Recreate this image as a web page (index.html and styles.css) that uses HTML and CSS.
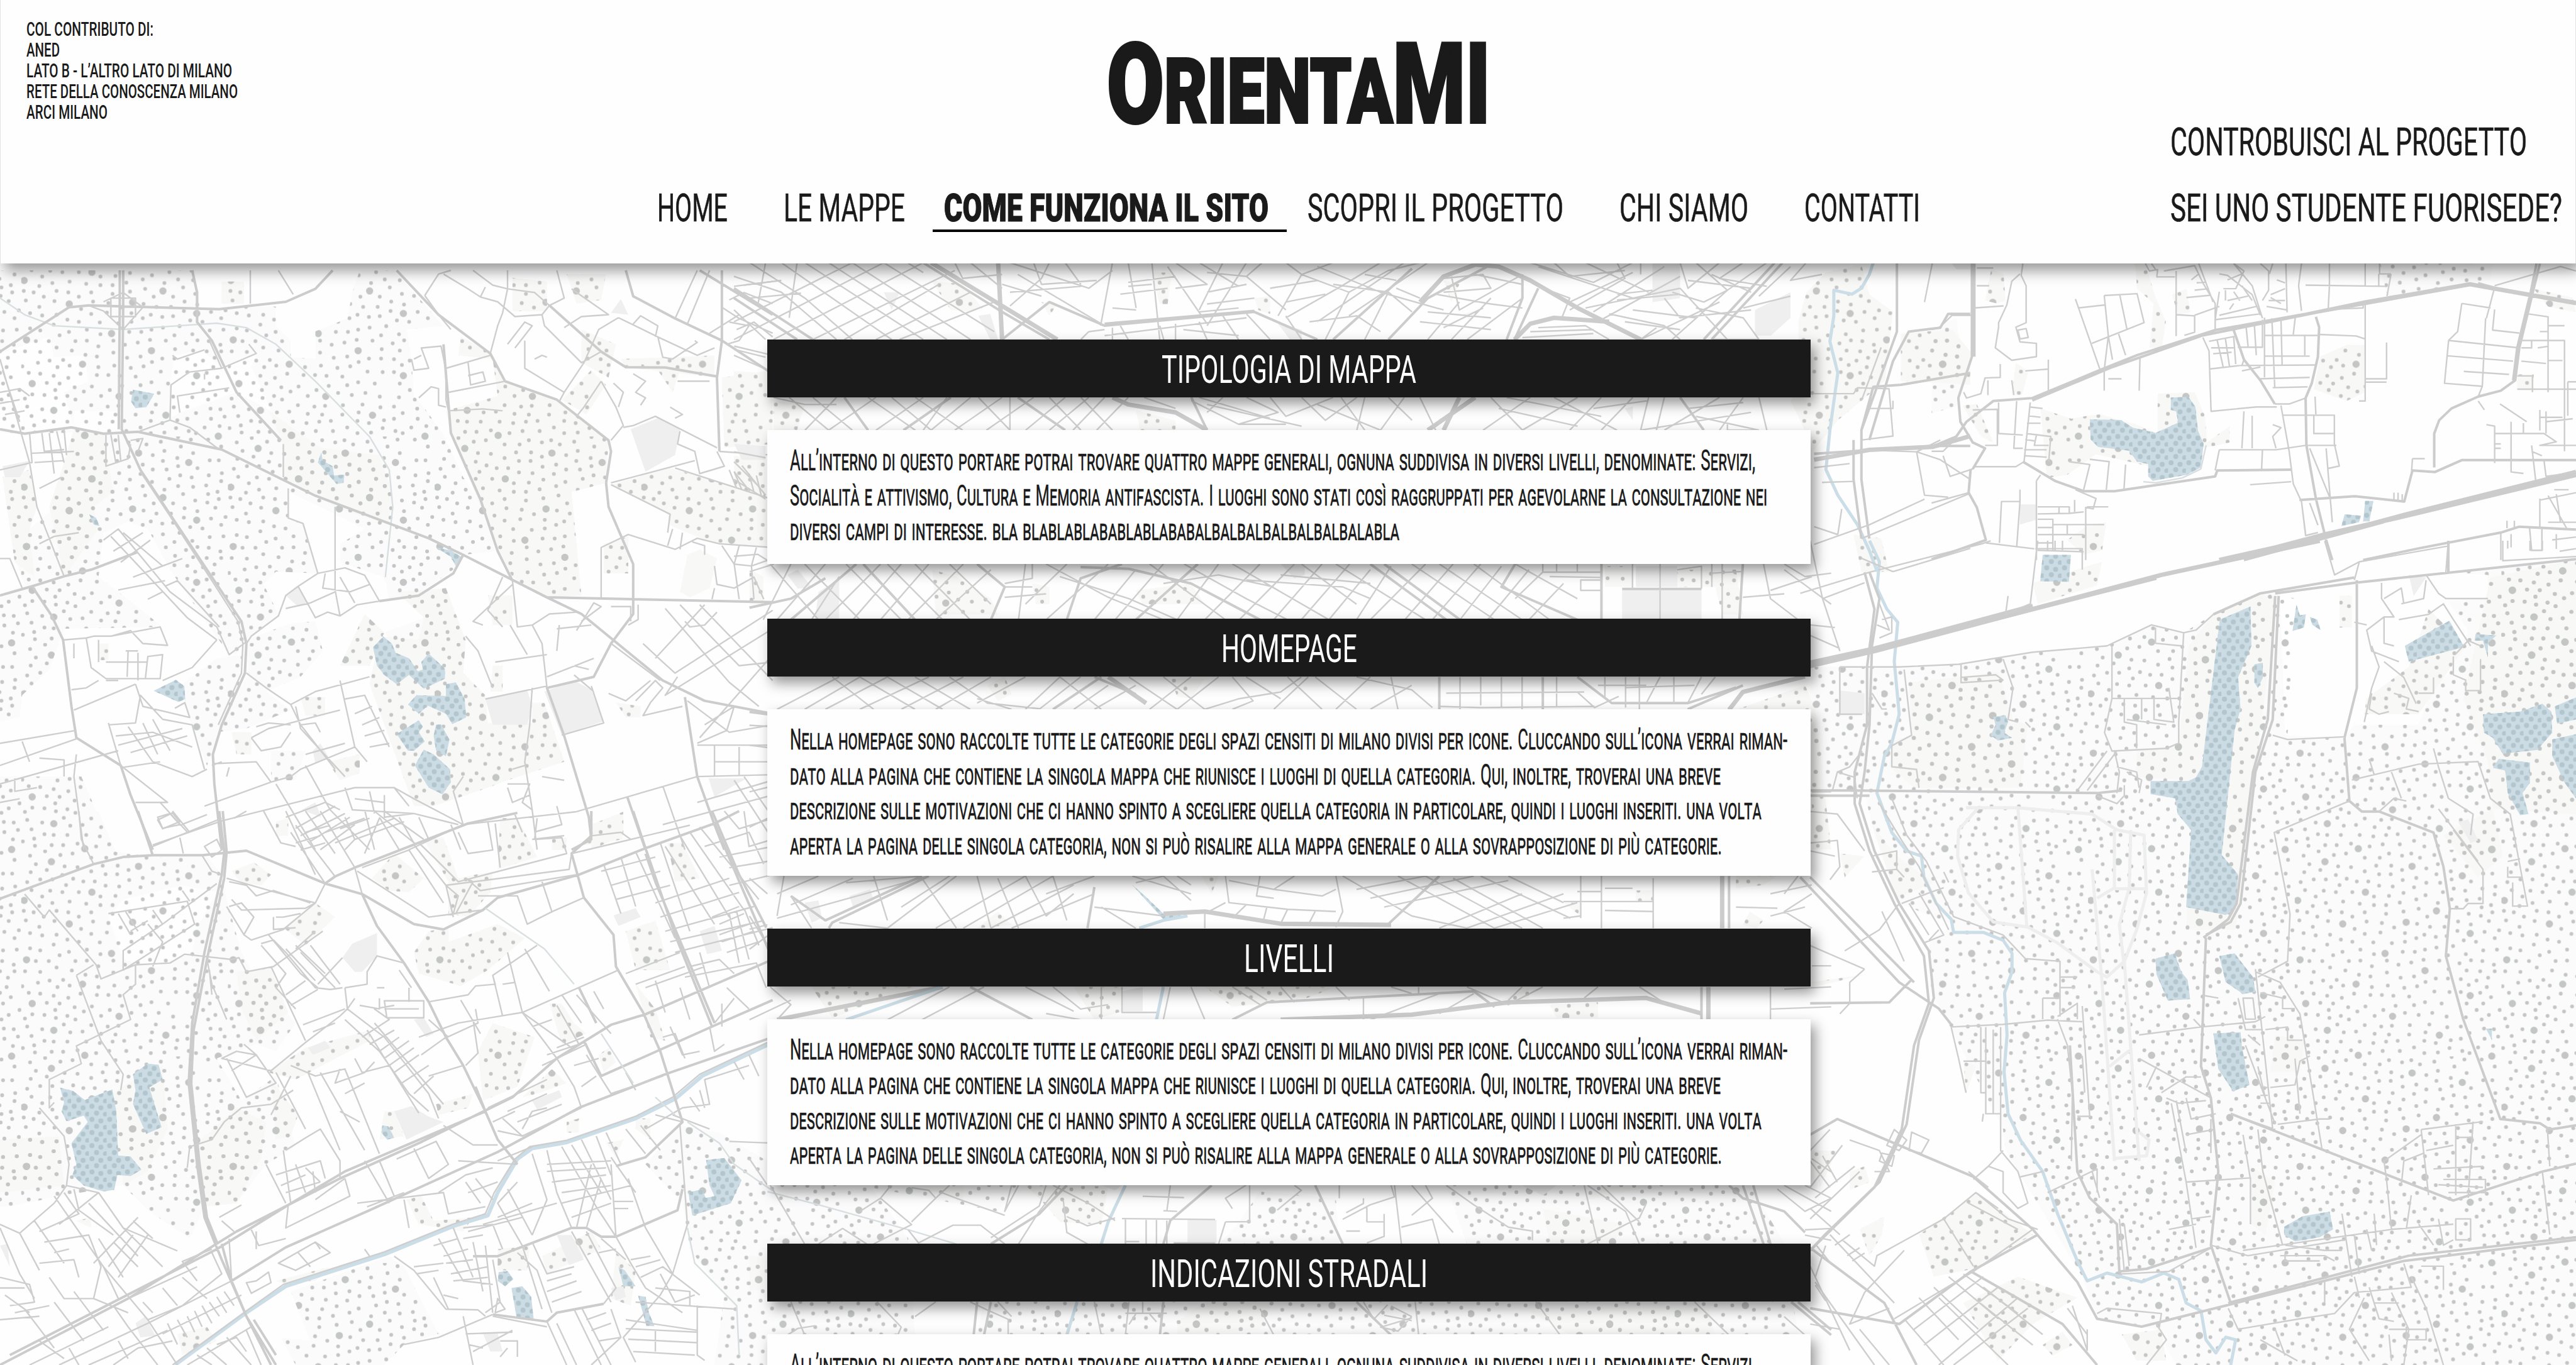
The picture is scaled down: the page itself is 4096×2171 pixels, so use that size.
FILE: index.html
```html
<!DOCTYPE html>
<html lang="it">
<head>
<meta charset="utf-8">
<title>OrientaMI</title>
<link rel="stylesheet" href="styles.css">
</head>
<body>
<svg class="map" viewBox="0 0 6668 3534" preserveAspectRatio="none" aria-hidden="true">
  <defs>
    <pattern id="dots" width="1568" height="1568" patternUnits="userSpaceOnUse" patternTransform="translate(5940 2200) scale(.3412)">
      <path class="dot-s" d="M181 12h0M67 45h0M111 110h0M72 170h0M45 246h0M144 225h0M194 154h0M297 40h0M389 29h0M329 126h0M427 132h0M312 192h0M236 225h0M394 220h0M471 241h0M558 241h0M531 61h0M531 164h0M645 61h0M618 121h0M715 29h0M732 121h0M640 186h0M728 186h0M814 45h0M884 29h0M950 61h0M814 154h0M819 230h0M922 214h0M998 142h0M998 251h0M1059 40h0M1086 110h0M1075 186h0M1103 251h0M640 273h0M743 279h0M905 285h0M825 328h0M992 345h0M1124 322h0M922 377h0M1086 404h0M78 306h0M159 355h0M220 311h0M312 322h0M340 268h0M437 322h0M367 393h0M236 404h0M137 427h0M493 410h0M601 355h0M601 420h0M715 350h0M693 420h0M797 401h0M940 448h0M825 469h0M693 486h0M19 464h0M94 475h0M171 508h0M268 464h0M357 475h0M437 508h0M531 475h0M545 545h0M252 541h0M35 536h0M137 585h0M454 601h0M661 556h0M754 590h0M928 562h0M1005 508h0M1026 585h0M1152 508h0M1136 585h0M67 633h0M159 650h0M268 645h0M350 682h0M437 698h0M531 639h0M650 628h0M836 633h0M836 698h0M922 671h0M983 645h0M1070 661h0M1152 655h0M1075 742h0M988 758h0M911 775h0M819 775h0M737 709h0M596 703h0M498 758h0M362 775h0M246 720h0M144 764h0M67 748h0M291 801h0M111 845h0M209 845h0M411 845h0M498 841h0M601 792h0M699 841h0M787 872h0M884 856h0M977 835h0M1097 841h0M1162 801h0M585 884h0M268 894h0M144 927h0M29 922h0M384 916h0M487 949h0M574 962h0M699 932h0M803 971h0M905 962h0M1167 906h0M1070 977h0M1162 977h0M992 1003h0M928 1036h0M831 1048h0M706 1031h0M585 1042h0M367 1031h0M318 988h0M215 993h0M127 1009h0M275 1042h0M8 1036h0M57 1086h0M144 1092h0M246 1108h0M357 1124h0M450 1092h0M574 1102h0M661 1102h0M748 1108h0M868 1114h0M1059 1076h0M1174 1080h0M988 1157h0M1114 1167h0M905 1179h0M765 1184h0M536 1189h0M405 1195h0M291 1167h0M194 1162h0M258 1216h0M475 1227h0M672 1216h0M836 1238h0M940 1254h0M1043 1238h0M1152 1266h0M84 1249h0M176 1254h0M263 1276h0M350 1261h0M411 1288h0M606 1261h0M323 1326h0M531 1331h0M656 1342h0M737 1336h0M873 1331h0M1021 1326h0M1157 1347h0M159 1362h0M372 1386h0M465 1380h0M606 1397h0M715 1402h0M868 1402h0M992 1386h0M983 1450h0M1070 1467h0M176 1450h0M246 1456h0M350 1456h0M493 1456h0M596 1467h0M693 1456h0M781 1450h0M905 1500h0M231 1533h0M318 1533h0M427 1522h0M568 1543h0M667 1527h0M797 1527h0M983 1543h0M1086 1538h0M1174 1505h0M1184 1445h0M1260 1434h0M1326 1391h0M1260 1342h0M1190 5h0M1287 24h0M1418 24h0M1211 77h0M1304 126h0M1184 164h0M1190 225h0M1337 241h0M1517 77h0M1430 181h0M1499 181h0M1206 295h0M1293 311h0M1423 295h0M1522 279h0M1517 339h0M1190 377h0M1304 383h0M1403 372h0M1228 437h0M1489 420h0M1418 437h0M1320 486h0M1412 502h0M1499 475h0M1473 541h0M1239 545h0M1336 567h0M1234 616h0M1440 623h0M1550 611h0M1282 688h0M1375 698h0M1517 671h0M1201 731h0M1430 764h0M1534 758h0M1298 792h0M1337 839h0M1423 845h0M1250 862h0M1511 872h0M1304 916h0M1407 922h0M1517 922h0M1467 971h0M1379 993h0M1260 982h0M1320 1026h0M1457 1042h0M1260 1080h0M1407 1086h0M1489 1119h0M1304 1167h0M1430 1167h0M1380 1216h0M1555 1216h0M1473 1254h0M1298 1271h0M1418 1288h0M1436 1357h0M1511 1362h0M1543 1418h0M1440 1434h0M1391 1500h0M1505 1489h0M1271 1527h0M1326 1543h0M28 1281h0M45 1342h0M78 1413h0M98 1484h0M12 1505h0M104 1538h0"/>
      <path class="dot-l" d="M229 91h0M890 126h0M1271 198h0M536 322h0M22 385h0M1075 464h0M845 550h0M364 563h0M1331 635h0M685 787h0M40 835h0M988 917h0M465 1020h0M1331 1107h0M83 1167h0M742 1264h0M247 1370h0M1097 1407h0M482 -8h0M482 1560h0M1495 -2h0M1495 1566h0"/>
    </pattern>
    <pattern id="ripples" width="46" height="34" patternUnits="userSpaceOnUse">
      <path class="ripple" d="M8 8h0M31 12h0M20 26h0M43 29h0"/>
    </pattern>
    <clipPath id="fields">
      <path transform="translate(0 700) scale(1.2755 .9566)" d="M0 0H395L405 100L560 98L560 150L590 190V235L640 240V165L705 130L715 60L730 0H800L900 150L825 160L835 240L840 340L860 370L900 445L940 560L980 640L1005 760L940 770L930 800L840 885L790 890L780 830L690 790V740L740 700L650 640L585 600V670L615 685L645 820L560 815L535 850L565 930L500 1000L480 1040L460 1030L350 820L300 700L260 680L210 710L200 830L240 870L330 965L130 970L100 1080L45 1150L40 1210L0 1220V880L50 850L30 780L60 700L150 600V440L0 440V0Z"/>
      <path transform="translate(0 700) scale(1.2755 .9566)" d="M440 1050L490 1040V1100L430 1310L420 1340L380 1200L370 1120ZM505 1090L500 1000L590 955L640 950L655 1030L610 1100L540 1140L590 1190L500 1240L440 1250ZM780 980L860 940L890 1050L860 1080L800 1010ZM550 1300H620L600 1380H550ZM0 1370H165L230 1568H0Z"/>
      <path transform="translate(0 2100) scale(1.2755 .9145)" d="M0 0H200L235 115L310 130L420 130L450 180L460 250L490 400L510 450L600 600L560 680L520 660L440 700L490 820L560 750L600 950L540 1000L480 1110L415 1120L385 1210L300 1130L250 1060L120 1090L20 1120L0 1120ZM590 1360L790 1260L820 1290L860 1400L890 1480L820 1510L780 1568H600L570 1490L630 1500ZM1380 890L1460 910L1568 1000V1568H1450L1470 1370L1400 1240L1385 1110L1310 1000Z"/>
      <path transform="translate(4660 1400) scale(1.2806 1.361)" d="M20 240L200 240L320 235L470 212L620 200L710 160L775 175L835 140L930 100L960 100L1000 110L985 370L1100 375L1120 350L1250 350L1270 300L1320 240L1350 170L1310 115L1390 110V65L1310 60L1568 35V1568H760L720 1500L600 1480L570 1400L415 1160L410 1120L300 920L265 860L260 760L310 730L200 690L150 560L130 480L20 470Z"/>
      <path transform="translate(5000 250) scale(1.0638 .7653)" d="M1090 565H1365L1360 620L1110 680ZM0 790L60 750L70 850L90 900L60 1050L0 1070Z"/>
      <path transform="translate(1940 3000) scale(1.7857 .3406)" d="M0 100H160L230 600L240 1340H0ZM740 250L850 300L855 660H680L710 480ZM1010 200H1450L1500 640L1520 1340H330L340 1088H1460L1450 648H1040ZM160 202H390L360 400Z"/>
    </clipPath>
    <clipPath id="parks">
      <path transform="translate(0 700) scale(1.2755 .9566)" d="M935 180L995 220L1025 300L1130 350L1235 460L1230 575L1160 600L1180 880L1100 885L1040 830L1005 740L915 440L905 380L1010 340L1000 240L930 230ZM545 380L650 480L770 500L795 600L790 690L680 640L575 560V470ZM150 430L210 440L230 600L190 640L200 700L130 830L100 640L130 520ZM5 560L60 540L75 640L60 700L70 830L30 790ZM1240 580L1360 535L1480 580L1568 625V745L1450 740L1360 690L1355 660ZM1465 290L1568 270V470L1470 480ZM1260 240L1450 230V290L1270 262ZM1180 160L1250 200L1235 290L1180 250ZM805 870L905 860L945 1000L940 1090L985 1150L990 1225H1080V1170H1105L1145 1330L1030 1380L990 1400L880 1450H840L750 1120L770 990L850 1000L860 940ZM740 930L780 980L750 1070L690 1070ZM990 880H1040V960H1000ZM1225 740L1275 720V820H1225ZM450 30H495V90H450ZM1040 20L1110 30V110H1040ZM1150 10H1230L1220 80L1170 90ZM1140 350L1200 270L1230 310L1190 390ZM610 1155H660V1205H620ZM665 1330L730 1310V1360L690 1380ZM470 1250H510V1310H480ZM1200 1500L1265 1465V1530L1200 1568ZM200 1010H220V1055H200ZM1000 1070H1020V1140H995ZM1330 260L1380 270L1365 330ZM1250 1170L1300 1180V1210H1270Z"/>
      <path transform="translate(0 2100) scale(1.2755 .9145)" d="M470 170L515 145L550 180L530 210L490 205ZM575 330L640 260L680 300L620 380ZM755 190L800 120L860 190L830 230L790 225ZM860 80L900 75L930 190L1000 170L995 230L950 300L910 290V200ZM1015 20H1050L1090 130L1010 165ZM1120 75H1150V110H1120ZM1170 100L1245 30L1265 80ZM840 400L870 340L910 330V370L1010 320L1065 360L990 450L935 495L850 460ZM480 455L550 445L585 570L520 650L490 560ZM970 680L1000 600L1085 640L1050 780L980 820ZM1060 810L1120 730L1150 770L1090 800ZM1115 545H1140L1165 600L1190 630L1140 660ZM545 740L620 670L750 620V650L600 760ZM400 940L480 840L540 880L530 980L480 1110L410 1120ZM0 930L120 920L130 1060L0 1080ZM260 770L330 720L340 900L300 1020L250 1060L230 800ZM550 760L605 860L590 920L560 930ZM825 1100L855 1090L880 1160L960 1150L940 1190L850 1170ZM1010 1240L1075 1230L1070 1300L1010 1300ZM1100 1260L1200 1190L1220 1240L1110 1310ZM1250 1250L1290 1300L1280 1400L1240 1380ZM1355 90H1385L1420 190L1370 200ZM1270 340L1330 310L1360 450L1290 450ZM1290 490L1330 560L1350 650L1320 640ZM560 1330L670 1290L640 1330L580 1340ZM360 1480L420 1460L440 1500L370 1540ZM885 830L960 800L950 840L890 860ZM1290 870L1320 870V930L1290 900ZM780 850H800L820 920L770 930ZM560 30L585 20V70H560ZM155 1160L185 1150V1180ZM1230 940L1265 930L1250 980ZM1215 690L1235 670L1250 710L1225 740ZM1150 880L1175 870V910H1150Z"/>
      <path transform="translate(4660 1400) scale(1.2806 1.361)" d="M220 270L400 250L430 340L460 350L445 470H230L180 430L190 380L225 370ZM785 200L835 140L930 100L965 110L920 430L880 740L780 740L790 540L780 455L680 450V400L765 390ZM470 80L610 40L600 85L480 120ZM1145 300L1230 240L1270 130L1345 200L1250 330L1140 330ZM1395 70L1568 35V520L1400 510L1390 420L1340 300ZM1090 105H1115V165H1090ZM145 540L195 600L270 650L195 680ZM120 1310L170 1285L165 1320L140 1360ZM240 1320L360 1240L470 1320L350 1385L270 1400ZM330 1450L440 1400L560 1440L470 1490L400 1560ZM490 1530L530 1505L550 1530L510 1550ZM650 1510L730 1500L740 1560H680ZM20 1160L75 1160L40 1230ZM100 1200L130 1190L140 1220L100 1235ZM910 1190L960 1220L940 1320L910 1300ZM960 940L1020 950L1010 1010L950 1010ZM1300 560L1400 510L1420 600L1370 640ZM80 595L130 600L90 640ZM20 840L135 825L20 850ZM330 990L355 1000L335 1050Z"/>
      <path transform="translate(5000 250) scale(1.0638 .7653)" d="M495 565H520L545 680L570 760L560 850L530 850L540 700L500 650ZM585 670L620 650L630 730L600 740ZM145 585L175 600L180 690L160 700L130 690ZM945 880L1010 840L1055 840V1000L1010 1030L930 990ZM265 1055L340 1090L380 1080L410 1075L500 1110L550 1140V1005L640 1000L665 1080L670 1170L725 1115V1170L660 1190L560 1260L400 1210L330 1280L280 1290ZM75 1045L110 1040L150 1170L120 1150ZM205 900L235 930L220 1010H195ZM1465 650L1560 680L1568 730L1500 710ZM1425 940H1465V990H1425ZM380 1450L425 1440L415 1535L370 1550L330 1500Z"/>
      <path transform="translate(1900 680) scale(2.0408 .5102)" d="M250 90L290 110L315 230L300 250L275 240ZM390 200L410 210L400 270ZM530 50H555L550 210H540ZM660 180L680 170V260L665 240ZM900 90L920 110L910 200ZM925 260L945 240L935 300ZM1385 50L1430 10L1440 160L1470 250L1460 600L1400 800L1370 950L1340 700L1350 640V300L1360 150ZM1480 360L1545 340L1568 450V620L1480 600ZM0 550L40 560V920L0 900ZM0 980L40 1000V1440L0 1430ZM1420 1380L1455 1400L1465 1568H1430ZM50 700L90 720L80 850H50ZM510 750L560 800V850H515Z"/>
      <path transform="translate(1940 850) scale(1.7857 .4464)" d="M265 1400L300 1440L350 1568L360 1660H270ZM410 1480L435 1500V1600H415ZM560 1520L640 1480L660 1600H570ZM1240 1380H1280V1500H1240ZM1340 1400H1430L1440 1660H1410L1400 1500H1345ZM0 1400L20 1440V1600H0Z"/>
      <path transform="translate(1940 1740) scale(1.7857 .574)" d="M345 60L370 20L380 100L360 130ZM610 30H660L640 120L620 110ZM655 920H680L670 1000ZM1430 920H1490L1470 960L1430 975ZM1285 985H1310V1035H1285ZM1180 1040H1205V1100ZM1440 1140L1450 1080L1470 1120L1460 1155ZM330 1155L360 1080L380 1140ZM90 1420L190 1420L240 1420L180 1490L120 1560ZM470 1420H540V1530L500 1568ZM660 1420H850L800 1480L700 1510ZM1090 1480L1130 1425V1480ZM1430 170L1530 60L1545 160L1568 800H1540V168ZM1160 1500L1230 1490V1560H1170Z"/>
      <path transform="translate(1940 3000) scale(1.7857 .3406)" d="M180 202H310V350L280 260ZM400 202L520 210L510 500L450 480L420 300ZM660 1088H760L740 1300L620 1340V1240ZM1200 330L1290 230L1400 202H1250ZM1150 380L1270 500L1250 648H1160ZM1130 1160L1390 1140L1400 1340H1190ZM0 740H20V1000H0Z"/>
    </clipPath>
    <clipPath id="waters">
      <path transform="translate(0 700) scale(1.2755 .9566)" d="M270 323L313 334L297 370L275 373L266 355ZM652 492L655 515L675 530L678 555L699 553L697 575L683 578L645 520ZM181 660L195 670L202 692L190 688ZM885 750L915 758L936 775L925 800L915 775ZM778 991L795 1010L803 1035L830 1050L848 1085L858 1080L855 1060L870 1037L903 1078V1105L860 1132L830 1095L805 1120L780 1095L765 1070L757 1020ZM905 1120L925 1115L943 1160L946 1210L918 1228L905 1200L868 1178L850 1200L828 1175L845 1150L905 1152ZM850 1218L858 1235L850 1250L862 1275L840 1300H828L805 1255ZM885 1230L895 1228L912 1270L905 1315L885 1300L880 1260ZM860 1297L880 1310L913 1350L915 1385L898 1418L870 1400L842 1340ZM357 1108L374 1125L376 1160L362 1168L312 1138Z"/>
      <path transform="translate(0 2100) scale(1.2755 .9145)" d="M122 783L148 792L172 818L228 788L236 850L240 975L265 978L287 1015L265 1033L238 1030L232 1072L210 1077L170 1060L147 1030L155 1000L145 940L178 880L170 862L135 878L125 850L130 825ZM300 715L322 718L330 760L303 782L328 895L297 914L270 830L275 790L270 745ZM776 890L788 892L800 925L786 930L774 910ZM1433 988L1470 982L1505 1045L1483 1110L1405 1145L1397 1080L1425 1070L1432 1095L1450 1090L1440 1060ZM1012 1305L1030 1302L1042 1325L1025 1345L1010 1330ZM1038 1350L1060 1345L1078 1375L1083 1438L1048 1430ZM1255 1290L1268 1300L1290 1345L1265 1345ZM1295 1372L1310 1375L1317 1420L1328 1458L1312 1458Z"/>
      <path transform="translate(4660 1400) scale(1.2806 1.361)" d="M848 150L910 125L912 200L885 260L890 320L878 360L852 598L885 635L880 700L860 712L780 697L790 550L763 520L758 490L708 482V457H785L800 450L812 430ZM490 27H547L543 78L485 77ZM1222 200L1312 152L1342 202L1230 230ZM1003 122L1010 142L1022 140L1018 165L995 172ZM1030 145L1045 150L1052 170L1035 160ZM1365 178L1407 180L1390 195V222L1380 190H1363ZM1380 330L1455 325L1500 310L1518 325L1520 365L1490 398L1420 405L1400 375L1382 365ZM1525 315L1568 298V340L1530 348ZM1520 378L1568 368V490L1545 460L1520 410ZM1412 415L1475 422V460L1460 480L1472 520L1455 522L1430 480L1425 437L1400 432ZM718 795L757 785L770 820L783 835L788 872L743 875L720 825ZM847 790L878 785L915 830L920 858L895 862L860 840ZM835 937L890 935L893 965L908 1035L875 1047L845 1005ZM978 1305L1015 1285L1070 1276L1077 1310L1050 1325L1000 1333L978 1320ZM1386 928H1398V950ZM390 335L415 332L420 345L412 365L428 375L400 380L385 370L395 350ZM918 235L935 232V260L925 280L918 270Z"/>
      <path transform="translate(5000 250) scale(1.0638 .7653)" d="M385 1092L460 1094L490 1120L545 1138L600 1103L595 1065L582 1060V1018L625 1016L642 1050L648 1130L662 1175L655 1255L620 1280L538 1300L527 1285V1243L500 1235L480 1198L405 1185L387 1160ZM1005 1413L1045 1418L1040 1440L997 1453ZM1055 1368H1075L1065 1437H1050ZM270 1552H338V1568H270Z"/>
      <path transform="translate(1940 1740) scale(1.7857 .574)" d="M555 960L570 1000L600 1090L635 1100L600 1115L575 1030Z"/>
    </clipPath>
  </defs>

  <rect class="land" width="6668" height="3534"/>
  <rect class="field" width="6668" height="3534" clip-path="url(#fields)"/>
  <g class="built">
    <path transform="translate(0 700) scale(1.2755 .9566)" d="M0 225L100 180L110 235L170 230L180 300L130 330L150 425L50 440L0 430ZM345 300L355 230L410 215L450 265L520 230L510 260L550 380L480 330L365 385L345 400ZM150 380H245V440H150Z"/>
    <path transform="translate(0 2100) scale(1.2755 .9145)" d="M220 300L250 250L370 210L440 230L400 330L390 400L320 440L250 420ZM20 1120L120 1090L250 1060L380 1240L0 1300V1120Z"/>
    <path transform="translate(4660 1400) scale(1.2806 1.361)" d="M970 100L1120 85L1130 180L1100 375L980 370ZM20 640L260 760L270 860L20 850Z"/>
  </g>
  <rect class="park" width="6668" height="3534" clip-path="url(#parks)"/>
  <rect fill="url(#dots)" width="6668" height="3534" clip-path="url(#fields)"/>
  <rect fill="url(#dots)" width="6668" height="3534" clip-path="url(#parks)"/>
  <rect class="water" width="6668" height="3534" clip-path="url(#waters)"/>
  <rect fill="url(#ripples)" width="6668" height="3534" clip-path="url(#waters)"/>

  <!-- western districts -->
  <g transform="translate(0 700) scale(1.2755 .9566)">
    <path class="block" d="M1280 430L1335 400L1380 430L1370 500L1310 545ZM1105 1140L1165 1110L1200 1135L1225 1220L1140 1258ZM985 1160L1070 1135L1080 1180L1070 1230H1000ZM1240 115L1260 78L1275 120ZM5 530L60 515L40 560H10ZM580 880L605 855L628 905L605 910ZM1438 1375H1515L1450 1425ZM635 1300L650 1280L668 1320L640 1335ZM612 1460L640 1440L652 1480Z"/>
    <path class="park" d="M1395 770L1420 755L1455 780L1440 860L1400 885L1380 870Z"/>
    <path class="stream" d="M0 75L50 120L110 150L250 160L440 143L500 155L560 200L640 300L750 450L790 540L797 640L782 830"/>
    <path class="major" d="M250 0V100L247 430L285 540L350 670L440 850L490 950L500 1010L497 1090L450 1230L432 1310L435 1390L450 1568M243 0V100L241 430M0 220L140 100L180 95L445 105L580 85L640 50L675 0M0 430L50 442L145 425L210 442L280 437L450 485L640 610L870 725L940 770L1110 885L1568 898M0 880L65 855L130 828L185 810L280 762M65 855L105 935L128 1000L145 1180L155 1265L245 1340L265 1420L310 1568M1110 885L1180 930L1345 1110L1430 1165L1568 1200M1230 575L1235 640L1285 795V930L1240 1010L1205 1100L1110 1130L1145 1260L1195 1480L1200 1540L1160 1568M1465 0V190L1455 290L1460 490M1465 190L1568 280M1270 0L1285 70L1370 130L1465 190M1420 0L1568 120M1390 1155L1415 1370L1450 1500L1470 1568M1115 95L1220 220L1270 262L1350 263L1455 287M1273 1425L1310 1568M805 0L890 120L995 225L1025 300L1130 350L1235 460L1240 490L1230 575M390 0L400 60V140L430 190L480 330L570 460M940 770L920 820L850 880L770 895M900 200L915 440L975 620L1010 760L1040 840"/>
    <path class="minor" d="M285 545L345 665L435 850L483 950L493 1010L490 1090L443 1230M180 95L210 110L250 160L290 100L250 60L210 85M225 75H275V125H225ZM508 0V90M565 0L595 65M862 68L890 10L915 0M862 68L890 120L915 160M900 10L950 50L975 72L1010 85L1045 125L1100 120L1115 95L1085 60L1030 50L1000 40L960 0M1030 0V50L1020 115L1010 150L995 225M1130 0L1145 75L1115 95M975 72L985 45M1100 120L1105 150L1180 250L1220 220M1145 155L1180 125L1235 120L1160 50M1255 128L1335 180L1345 235L1365 240L1415 195L1410 190M1285 145L1300 123L1335 150L1330 180M1255 128L1215 160L1185 250M1065 190V265L1145 330L1185 250M1030 200L1065 140L1080 150L1045 210M1085 240L1100 230L1110 235M1145 330L1135 355M1220 300L1185 370L1170 395M1220 300L1250 370L1265 420L1240 460M1265 425L1285 420L1330 395L1455 480M1245 305L1265 330L1255 370M1285 280L1310 300L1290 330L1310 345L1300 365M1335 180L1415 230L1450 210M1375 300H1440M1370 400L1385 390L1360 370M835 240L840 270L870 265L855 210L895 205L905 270V350L910 380L980 375L1020 380M855 230L840 240M905 265L995 230M950 250L955 310L985 300L980 275L950 285M910 330L1025 300M850 345L875 315L890 320V365L905 370M1380 435L1375 470L1410 490L1420 550L1470 530L1455 490M1240 575L1410 515M1370 535L1568 620M1240 580L1360 660L1355 710M1480 540L1495 590M1490 545L1505 592M1520 550L1530 600M1535 555L1545 610M1460 490L1568 500M1415 0L1370 130M1440 0L1395 145M1500 120L1440 170M1465 100L1500 130L1568 170M1510 40L1568 30M1480 80L1510 60L1568 90M1480 140L1520 150L1500 190L1475 200M1495 160L1530 140L1568 180M1490 205L1568 230M1220 885V750L1275 715L1370 755L1415 725L1460 740L1568 750M1365 700L1355 745M1385 710L1380 755M1405 735L1430 745V770M1465 745L1490 795L1525 800L1568 780M1450 800L1455 850L1490 860L1530 830L1550 890M1500 745L1490 795L1500 890M1535 750L1525 800L1530 890M1450 860L1445 890M1040 840L1050 965L1080 960L1115 930L1170 925M1080 960L1100 1010L1110 1130M1135 960L1130 1030M1170 975L1205 900L1220 910L1180 950M1240 910H1280V950M1205 1050L1110 1100M1275 960L1295 945V905M1330 1050L1430 905M1340 1110L1240 1010M1420 905L1568 1110M1380 905L1500 1070L1568 1060M1350 915L1480 1115L1540 1180M1455 925L1430 960L1400 965L1390 950M1305 1010L1345 1060L1370 1090L1568 920M1375 1100L1350 1150L1568 970M1290 1165L1330 1110L1345 1130L1320 1170L1305 1205L1385 1180M1420 1265L1568 1040M1395 1165L1480 1250L1568 1230M1415 1280L1475 1245L1490 1180L1430 1230M1235 1145L1270 1165L1320 1110M1450 1285V1370M1500 1290V1365M1415 1285H1568M1450 1330H1568M1415 1370L1568 1365M1170 1465L1415 1370M1345 1395L1390 1568M1415 1440L1568 1380M1345 1500L1568 1420M1490 1380L1568 1540M1510 1370L1568 1480M985 1160L1110 1125M1165 1095L1205 1140M1080 1130L1075 1230L1065 1330L1080 1460M1140 1258L1225 1225L1200 1125M1005 1060L1110 1040M945 990L970 1030L1000 1130M1040 850L960 950L980 960M1020 830L990 920L1020 965M1035 960L1070 1040M1165 1070L1195 1080M1130 970L1200 960M585 590V670L615 685L645 820M680 640V865L690 935M645 820L605 855L580 880L565 935L510 990L500 1010M645 820L700 805L740 825L770 895L725 905L690 935L665 925L640 940L605 855M660 820L655 860L710 870L750 850M680 870L630 900L580 915M690 830L720 900M500 1090L540 1130L590 1175L610 1230L680 1350M575 470V560M280 437L345 405L385 425L445 485M345 405L347 310L385 275L450 265L520 225L505 200M365 385L360 340L465 318M415 215L360 240L350 230M450 265L425 190M415 280V295M0 240L60 520L75 640L130 828M60 440L65 520L0 540M85 440L90 490L130 485M100 440L110 550M115 435L130 520M130 430L135 500M65 495L150 490M70 520L130 515M80 590L125 560M5 270L40 410M0 330L40 320L60 340M0 360L40 350M10 390L50 380M215 445V530L260 510L265 470M225 445L235 520M240 445L245 515M265 460L290 455L280 490M210 730L240 700L345 870L440 965L465 1040L500 1005M225 720L380 940L440 1000M250 710L330 800M230 760L290 710M245 790L305 730M270 830L370 780M335 855L360 840L445 965M240 865L335 840M300 890L330 870M80 740L110 720L160 710M0 780H20L45 860M130 1000L175 995L190 990L225 990L325 965L340 1015L290 1010L265 975L225 990M175 995L185 1075L215 1105H325L330 1040L300 1045L295 1105M215 1060H300M200 1000V1060M260 1030L258 1100M280 1035V1110M255 1030H280M330 1110L390 1075L440 1000M275 1120L290 1180L385 1210L375 1170L355 1185M150 1190L275 1120M145 1135L175 1130L200 1110M150 1050V1010M215 1110L240 1110M0 1280L155 1245M0 1340L155 1268M0 1390L240 1300M45 1275L60 1330M80 1320L130 1325V1370M220 1225L245 1340M220 1230L275 1225L285 1150L330 1215L390 1230L415 1350M235 1260L310 1250L390 1290M240 1285L370 1240M265 1305L380 1260M260 1235L310 1330M290 1225L320 1310M310 1215L345 1300M30 1375V1410L75 1400M155 1310L150 1370L170 1568M250 1345L325 1330M245 1340L340 1440L275 1440M325 1440L380 1520M320 1480L345 1470L365 1500L330 1510ZM310 1330L390 1370L420 1350M0 1440L40 1430M415 1450L550 1385L590 1370L610 1350L720 1290M435 1335L520 1330L550 1385M460 1370L465 1345M310 1555L450 1490L720 1400L800 1400L840 1430L940 1500L1170 1465M450 1330L430 1340M510 1265L545 1240L575 1230L690 1190M510 1265L530 1300L570 1290L590 1250M520 1235L545 1225L590 1230M590 1175L640 1140L750 1100M690 1110L720 1290L745 1330M700 1160L740 1150L790 1290M720 1200L755 1180M735 1230L770 1210M740 1260L780 1245M750 1290L790 1280M610 1230L640 1225L650 1250M620 1310L700 1280M600 1180L610 1240L700 1370M620 1340L670 1460L750 1568M560 1390L640 1568M580 1480L660 1440L690 1460M600 1510L680 1450M610 1530L700 1470M630 1545L710 1480M650 1568L720 1500M700 1400L715 1460L840 1470L930 1500M750 1410L760 1470M780 1420V1480L840 1470M800 1400L830 1450M720 1430L780 1440M700 1480L720 1540L700 1568M740 1460L760 1568M770 1480L810 1568M810 1480L840 1550M850 1480L870 1540M830 1568L940 1500M915 1500L935 1568M940 1370L920 1410L940 1500M1030 1390H1075L1060 1440L1080 1460L1090 1568M1040 1350L1065 1340M1030 1400L1040 1440L1075 1420M1085 1520L1140 1500L1130 1450M1100 1370L1145 1380M1080 1540L1145 1530"/>
  </g>

  <!-- south-western districts -->
  <g transform="translate(0 2100) scale(1.2755 .9145)">
    <path class="block" d="M695 415L715 375L765 345V410L735 455H720ZM800 850L835 835L870 865L900 880L825 930ZM1245 295L1290 275L1300 300L1255 325ZM1420 340L1450 325L1465 395L1435 405ZM840 590L860 585L880 630L865 640ZM625 670L660 650L670 670L635 690ZM1080 820L1135 790L1140 810L1090 845ZM1130 1200H1160L1185 1270L1155 1285ZM0 1230L15 1225L20 1290ZM275 1450L295 1430L315 1485L285 1490ZM980 1478H1010L1020 1530L995 1530ZM1240 1350L1265 1345L1270 1375L1250 1385Z"/>
    <path class="canal" d="M355 1568L500 1420L580 1345L780 1255L920 1175L990 1145L1010 1080L1050 985L1080 955L1150 938L1290 870L1370 815L1425 750L1568 655"/>
    <path class="minor" d="M350 1568L495 1420L575 1340L780 1248L918 1170L985 1140L1003 1080L1045 985L1075 950L1150 932L1290 864L1365 810L1420 745L1568 648"/>
    <path class="major" d="M445 0L455 115L450 180L415 400L390 600L383 770L400 1000L415 1150L450 1270L500 1430L560 1568M452 0L460 115L455 190L420 420L393 620L388 770L405 1000L420 1150L440 1220M0 248L190 150L250 130L310 125L410 125L500 112L660 205L735 235L840 320L900 335L980 280L1010 245L1175 180L1310 105L1450 35L1500 0M0 1568L260 1380L480 1190L690 1040L850 940L1040 810L1130 700L1240 605L1310 575L1568 420M20 1540L440 1240L585 1115L700 1020L985 850M660 205L680 185L720 160L840 95L950 35L1050 5M735 235L765 325L820 430L870 540L905 640L940 720L985 850L1010 930L1050 1000M985 850L965 780M1285 0L1310 105L1370 350L1445 610M1310 120L1330 200L1450 600M1450 35L1568 420M1445 0L1500 180L1555 330M1200 0V70L1160 120L1185 245L1245 350L1250 440L1305 570L1340 680L1385 880L1310 980L1250 1005M1445 610L1568 535M1175 500L1210 600M1185 650L1220 750L1445 610M470 1330L580 1235L750 1130L1010 965L1175 840L1350 745L1568 640M960 1260L1010 1260L1160 1180L1190 1180L1220 1205L1250 1205L1375 1130L1385 1070M1000 1425L1110 1445L1130 1420L1225 1395M450 1225L470 1330L500 1430L550 1568M280 0L310 125M515 1440L560 1540"/>
    <path class="minor" d="M1380 890L1395 1170L1365 1310L1340 1370L1265 1490L1290 1560M1365 860L1440 900M50 235L90 300L100 280L195 435L205 475L275 435L345 430L375 405L470 420L485 415L500 455L555 440L655 340M155 465L190 435M155 465L205 650L250 745L245 790M275 435V490L250 520L265 590L155 665L165 715L100 760V840L110 825M80 840L130 920L140 1000L135 1060M160 0L165 80L190 150M220 290L380 255L395 320L250 450V395L330 320L440 205M240 290L265 350M255 285L280 340M265 340L300 310M310 280L330 320M300 320L330 370L310 440M370 225L385 255M410 125L430 170L450 180M415 100L440 80L450 110L430 130ZM420 420L430 490L460 590M425 450L430 520M380 1010L385 950L430 930L455 880L490 840L550 830L595 790M465 200L500 210L520 240L555 225L630 260M460 190L560 230L640 260L660 205M470 250L490 280L620 275L640 260M465 270L490 260L515 300L495 350L460 270M560 300L575 300L610 290M555 300V335L600 330M510 365L575 335L640 260M495 350L510 365M530 375L555 365L580 400L640 500L670 505L695 500M545 350L610 460L645 500M530 380L580 460L560 500L600 560M580 390L640 480M600 380L660 460M630 380L690 490M610 400L680 500M640 340L600 390M695 415L645 490M700 500L705 560L690 580L620 655L550 735L450 700L480 680L520 690L470 735M550 440L590 560L620 650M580 520L620 480M590 550L645 505M615 605L700 560M635 625L680 600M460 700L500 810L560 770L520 690L495 660M720 530L705 560L780 640L870 800L890 870M745 620L850 855M760 600L900 830M700 590L770 680L830 800L870 850M735 640L790 590L760 560L800 550M750 660L800 620M770 680L810 640M780 700L830 650M790 720L840 670M800 740L850 690M815 770L870 720M840 800L880 750M780 537H860V585H785ZM780 560H850M770 530V560L730 550M820 430L765 410L745 455V490L700 500M765 500H780M830 500V540M810 450L835 500M870 540L950 520L965 495L1005 490L1000 465L1090 380M1000 465L1020 580M1030 400L1060 570L1255 450M1065 390L1115 510M850 640L930 600L1060 570L1160 670M870 590L910 640M1020 490L1045 485M935 535L975 630M900 645L970 600L965 560M945 720L970 685L960 590M870 750L940 720M905 640L855 690M560 740L620 900M590 720L640 750L700 730L770 970M625 740L690 960M650 740L740 960M690 730L680 770L740 740L760 710M720 700L735 740L790 720L820 780M700 800L740 770M690 850L730 880M580 960L620 925L650 900L690 990L690 1040M550 860L590 750M575 960L590 1110M540 1000L580 1110M560 1030L650 990L660 1040M600 1000L620 1080M620 1010L650 1050M635 1020L640 1080M570 1060L620 1030M580 1080L650 1050M805 985L885 935L910 1000L870 1040L840 955M900 890L960 945H1010M700 1040L710 1090L580 1180L585 1115M740 990L790 1110M770 990L800 1090M745 1120L820 1080M725 1110L900 1080L910 1140L985 1120M890 1080L945 1030L1000 1010M945 1050L975 1110M965 1040L1000 1100M950 1080L1010 1050M930 990L1050 1000M820 1100L830 1180M510 1185L525 1230L580 1210M520 1330L545 1305L550 1335L510 1365L500 1335ZM465 1210L470 1330M445 1150L490 1115M450 1160L475 1190M565 1280L640 1220L670 1250L600 1300ZM605 1250L630 1290M640 1220L650 1240M800 1260L840 1300L905 1410L970 1412L985 1430M840 1290L900 1280M845 1310L890 1300M740 1240L750 1260M0 1170L40 1195L110 1110L135 1060L200 1080L250 1180L360 1245M110 1090L210 1290L240 1380M0 1180L40 1310L70 1380M40 1195L80 1300M70 1160L130 1280M80 1190L160 1140L130 1080M90 1220L180 1200L205 1290L190 1380L260 1420M110 1250L140 1240M150 1070L160 1130L230 1200M180 1110L280 1260M200 1080L120 1170M270 1160L310 1210M280 1150L190 1280M250 1180L330 1290M270 1200L220 1290M300 1200L240 1320M230 1220L280 1290M200 1210L250 1320M80 1280L150 1270L160 1320M0 1320L60 1340L70 1390L20 1400M0 1350L50 1350M10 1370L60 1420M100 1320L130 1380L190 1380M30 1420L100 1400M0 1440L80 1430M110 1390L170 1500M150 1360L210 1470M50 1410L110 1520M210 1290L300 1440L370 1400L450 1310L430 1250M230 1400L260 1460L320 1568M300 1440L360 1568M260 1380L400 1290M290 1390L310 1420M330 1350L360 1400M370 1320L420 1380M430 1240L370 1275L400 1330M120 1568L300 1450L470 1330M180 1568L340 1470M60 1568L220 1460M140 1520L160 1568M240 1500L260 1550M80 1500L130 1550M340 1450L360 1510M360 1440L380 1490M380 1430L395 1475M395 1415L410 1460M410 1400L430 1450M425 1390L445 1430M440 1375L460 1420M455 1360L475 1400M330 1480L490 1370M230 1568L280 1520L350 1500M380 1568L510 1460M440 1510L480 1490L500 1530M400 1540L430 1568M420 1520L460 1568M460 1490L510 1568M500 1470L530 1568"/>
    <path class="minor" d="M840 95L905 210L920 300M720 160L735 235M725 170L870 300L925 290L960 200L945 190M735 160L830 110L900 260M850 90L880 130L930 200L1150 120L1140 75L1085 80L1090 20M905 210L1155 165L1160 120M950 195L975 225L1170 180M905 210L930 240L920 290L980 280M970 240L1050 240L1070 320L1120 285L1185 245M1100 200L1120 285M930 60L950 120L1000 110L990 30M1005 35L1015 160M1045 10L1060 60M600 40L680 185M590 60L660 205M580 0L640 180M610 110L660 90M600 90L650 70M620 60L670 40M650 0L720 160M620 0L680 120M690 50L750 20M660 60L740 20M680 90L800 20M760 0L845 95M780 0L860 80M720 80L820 30M740 120L770 20M475 20L500 0M320 25L350 5L365 30L330 50ZM365 40L420 10M350 0L385 60M310 100L450 20M365 75L372 120M535 0L570 90L600 100M1200 70L1260 60L1280 80M1160 120L1400 40M1225 150L1260 290M1260 130L1290 270M1290 115L1370 360M1340 90L1400 340M1350 100L1450 320M1380 70L1480 300M1400 60L1510 280M1420 45L1540 250M1220 170L1330 130M1240 210L1340 170M1250 250L1360 210M1330 260L1480 190M1340 300L1500 230M1350 340L1530 270M1360 370L1550 310M1370 400L1568 330M1430 100L1520 60L1550 150M1460 130L1568 100M1480 160L1568 140M1470 0L1500 50L1568 20M1510 0L1520 100L1568 80M1480 210L1568 180M1445 300L1500 270M1460 320L1510 290M1460 350L1520 320M1465 370L1530 340M1475 400L1540 370M1480 290L1500 430M1495 285L1520 420M1510 275L1540 380M1390 470L1535 430L1555 500M1400 440L1460 420L1490 460M1420 400L1440 500M1380 500L1400 590M1330 480L1350 570M1310 500L1430 440M1270 460L1380 400M1290 490L1390 440M1360 610L1385 690L1420 680M1345 640L1370 630L1390 700M1440 610L1450 680L1470 660M1450 600L1490 530M1465 545V610M1475 500L1520 560M1130 550L1175 660L1110 690M1170 520L1240 630M1205 510L1225 560M1060 570L1130 700L1165 780L1180 840M1080 610L1120 590M1140 520L1180 600M1165 720L1215 700M1130 670L1185 640M1100 720L1190 660M1190 690L1240 800L1345 750M1210 750L1180 780M1270 740L1290 790M1010 905L1060 920L1180 840M1020 870L1060 920M1030 850L1110 800M1050 880L1140 830M1060 900L1080 850L1110 840M990 840L1110 760M1000 880L1045 850M1010 990L1080 950M1080 970L1110 1100L1080 1200M1110 960L1130 1080L1160 1180M1140 950L1210 1120L1250 1205M1160 945L1220 1080M1180 930L1240 1100M1210 920L1240 1030M1110 1000L1240 990M1110 1020L1230 1010M1120 1050L1230 1030M1140 1080L1240 1060M1140 1110L1280 1060M1160 1150L1240 1110M1200 1000L1170 1180M1220 1040L1190 1180M1240 1000L1250 1205M1245 1105H1285M1245 1125H1275M1275 1040L1310 1180L1365 1310M1250 1205L1280 1280L1310 1350L1385 1420M1240 980L1290 1080M1300 890L1340 960M1310 900L1385 840L1440 830L1430 760L1520 720M1400 810L1420 850M1420 790L1430 840M1490 710L1510 760M1520 690L1540 750M1270 900L1310 970M1230 910L1260 1000M1330 860L1385 880M1050 1050L1010 1110L1060 1230L1100 1410M1030 1070L1080 1200M1010 1150L1080 1110M980 1170L1130 1110M950 1190L1060 1150M920 1180L960 1320M940 1180L1000 1170L1020 1240M940 1210L980 1200M890 1210L940 1330L1000 1340M880 1230L930 1210M900 1260L950 1240M905 1280L960 1270M915 1310L990 1290M920 1330L990 1320M960 1220L980 1360M985 1230L1000 1420M1000 1270L1015 1390L985 1420M880 1320L910 1410M900 1370L930 1380M1010 1380L1025 1410L1005 1420ZM1050 1250L1090 1300L1120 1420M1080 1220L1110 1310L1165 1290M1110 1330L1160 1310M1110 1360L1170 1330M1120 1390L1180 1360M1160 1190L1240 1390M1190 1190L1250 1350L1225 1395M1220 1210L1270 1270M1215 1250L1250 1240M1280 1270L1320 1260M1290 1290L1340 1270M1300 1320L1345 1290L1420 1370M1330 1350L1400 1360V1400M1340 1310L1370 1390L1410 1370M1290 1390L1495 1410M1270 1440L1415 1470M1270 1465L1415 1475M1275 1495L1415 1505M1285 1530L1410 1540M1415 1400V1540L1430 1555M1330 1470V1530M1110 1445L1150 1568M1130 1450L1170 1568M1165 1410L1220 1568M1180 1405L1240 1568M1240 1410L1260 1490L1200 1568M1190 1440L1230 1420M1200 1470L1240 1450M1215 1500L1260 1490M820 1510L890 1490L1000 1425M940 1430L960 1568M1000 1430L1110 1460M945 1480L1040 1475M960 1530L1040 1470M1015 1500H1050V1545M1030 1520L1015 1545M950 1510L980 1520M1480 935L1568 940M700 1040L640 1100M520 1190V1240"/>
    <path class="stream" d="M985 275L1105 390L1165 490M1220 630L1285 770M1330 810L1370 860M1395 880L1460 940L1490 1000L1568 1075M1395 1180L1410 1280L1495 1400L1500 1540"/>
  </g>

  <!-- eastern districts -->
  <g transform="translate(4660 1400) scale(1.2806 1.361)">
    <path class="block" d="M80 285L130 290V330H80ZM1230 65L1265 70L1240 105ZM1330 535L1350 530L1370 570L1355 575Z"/>
    <path class="river" d="M140 0L160 40L155 90L175 130L197 155L190 230L200 330L185 385L170 410L155 480L185 555L215 590L245 600L250 640L275 690L305 720L310 745L370 745L410 760L428 785V820L413 860L418 940L412 1010L420 1090L445 1140L490 1200L520 1280L560 1370L580 1408L620 1393L690 1410L735 1393L765 1405L780 1450L810 1465L820 1520L840 1545L860 1515L880 1520L870 1568"/>
    <path class="runway" d="M335 508H440L590 520L640 550L695 560L700 670L680 740L655 800L620 830L600 820L520 765L460 735L390 725L340 670L318 600L320 550L360 508M440 508L458 735M590 625L610 840L635 1180M655 800L685 1180M635 550V660L600 680M668 550L665 660L645 730L655 810M635 662H700M625 1000L665 970M635 1175L700 1170L705 1140L685 1125"/>
    <path class="trunk" d="M20 238L150 210L470 130L730 65L1050 0M20 232L150 205L470 124"/>
    <path class="major" d="M20 240L720 72M20 475L100 475L600 480L650 475M20 485H140M140 60L160 110L145 200L140 350L130 440L120 500L150 590L200 690L260 780L270 870L240 950L215 1110L160 1220L50 1320L20 1350M130 60L150 130L135 240V350L110 440V500L140 590L190 690L250 790L260 880L230 960L205 1120L150 1230L20 1350M0 640L200 840L280 890L305 920M20 640L230 840M20 880L180 878L225 835M20 1130L75 1100L200 1150L350 1210L470 1310L560 1410L600 1480L690 1495L860 1455L1220 1370L1568 1330M865 1450L1230 1360L1568 1325M960 100L1120 80L1568 35M835 140L930 100L1120 70M820 750L870 725L890 690L920 440L955 340L967 105M815 755L865 720L882 690L915 440L945 340L960 105M820 755L810 1000L830 1060L845 1200L830 1340L870 1450M870 1090L1060 1160L1320 1255L1500 1200L1568 1185M1125 75V280L1100 375M1100 375L1110 495L1135 515H1170L1280 555L1300 620L1313 700L1305 790L1340 910L1415 1100L1495 1108L1515 1120L1568 1112M1310 0V60M20 1460L200 1490L345 1390L480 1320M20 1345L170 1450L235 1568M345 1390L530 1490L600 1568M545 960L555 1120L560 1200L585 1250L640 1300L645 1390L700 1385L830 1345"/>
    <path class="minor" d="M20 0L45 110L80 210M0 100L140 60L370 5L385 0M45 110L130 80M20 160L70 165M20 180L80 205M480 0L465 120L415 140L420 105M475 15H570V55M500 0V18M515 0V18M530 0V18M1060 0L1080 65L1130 40L1310 10M1310 0L1305 60M1130 40L1120 75M1420 0V38L1568 30M1475 0V18H1500V0M1430 0V15M1535 20L1568 15M160 120L180 170L155 160M165 150L185 145V175L160 185M80 240V330H125M80 240H200L320 235L470 212L620 200L710 160L775 175L800 170L835 140M325 235V270L410 265L395 255L325 260M410 225L430 280L420 340L440 345M455 345L465 355M210 245L225 370L185 390V430L235 435L240 470M145 290L165 320H175M630 200V300L615 365L630 400L740 395L765 385V345L775 175M718 165V195L770 200M630 300H765M655 300V345L680 350V395M660 340L740 350M690 300V340M715 300V340L755 345L745 280M620 400L560 475M640 400L580 475M635 400L645 440L640 480M640 430L680 440L685 470M660 440L690 455L685 480M600 485L640 500L655 485V465M125 400L100 430L75 440L65 475M75 440L110 450L115 490M20 515L75 520L130 590M20 575L75 570L80 620L60 645M20 590L70 600M145 600L195 590V625L145 630M195 625L210 640M185 490L215 560L255 610L310 715L410 750L455 795L525 800V905M160 500L205 570L240 620L300 740M205 690L260 670L290 660M200 690L160 740L90 780M240 670L290 750L250 765M165 705L210 800M220 690L260 750M130 815L20 770M130 815L100 840V880L80 900M290 630L300 650M260 760L280 740M305 925L410 920L500 912L570 915M305 925L320 985L335 1050M365 925V1050H375V990H330M375 925V1090H405M390 930V1090M370 1090L368 1105M405 925V1160L440 1200L460 1260L440 1270L410 1240V1200L380 1190L350 1215M340 1200L380 1230M410 1160L380 1190M445 1210L490 1200M520 910L540 960L550 1050L548 1180M490 870V910M490 870H525V905M525 830H560M525 850H555M520 905L560 880V910M570 885L585 1095H560M570 980L575 1050M500 1240L600 1195V1240M590 1200L605 1250M645 1290L655 1390M655 1300L665 1380M685 940L810 925L920 915L940 905M815 865L845 870M810 925L795 910M685 985L830 1060M720 1000L700 1040M730 1050L780 1020L810 1020M740 1060L765 1070L820 1065M750 1070L780 1220L800 1345M760 1065L780 1165M780 1060L790 1100L840 1090M780 1130L835 1120M780 1220L910 1212V1300M790 1290L830 1285M745 1310L800 1300M830 1100V1165M925 1120L935 1200L975 1340M895 1130L910 1215M870 1090L930 1110L960 1120M920 815L955 1120M925 830L985 800L990 710L958 555L1110 495M920 820L970 840L1010 900L1055 1160M930 860L975 870V890H1000M885 870L900 930L935 930M895 870H915L920 910H900ZM905 940L930 960M940 930L985 925V950H1015M900 960L960 1110M925 1000L940 1060M950 1040L1000 1035L1010 990L1030 980M965 1110L1050 1100H1070M1000 985L1010 1090M930 1040H945M930 1055H945M930 1070H950M955 370L985 378L1100 373M1115 455L1250 425L1370 420L1395 490L1435 520L1470 695H1440V650M1150 415L1160 445M1195 440L1215 490M1280 395L1290 430L1310 490L1360 520L1355 560M1170 515L1200 490L1225 495M1290 510L1370 610M1320 550L1380 625V690H1350L1340 700H1315M1430 610L1455 605M1430 620V640H1460M1175 80V110L1200 145L1180 145L1145 170L1155 210L1210 230M1120 155L1145 160M1180 145V195L1200 200M1180 110L1215 90L1220 120M1215 120L1260 110L1265 75M1210 150L1270 140L1300 120L1320 150L1355 200M1265 65L1290 100L1305 110H1390M1155 200L1170 240L1155 280L1140 345M1155 290L1150 320L1170 330L1190 325M1180 230L1220 260L1245 310M1200 290L1230 300L1225 320L1250 325M1325 215L1350 190L1375 200M1320 220V255L1345 265V285H1375V225M1250 290H1280V260M1255 1120L1270 1245M1255 1120L1380 1105M1325 1110V1245M1360 1105L1350 1250M1255 1130L1180 1180L1185 1215L1195 1310M1325 1135H1360M1265 1160L1320 1150M1280 1195L1380 1190M1300 1215H1385V1240H1310M1290 1225L1380 1230M1215 1225L1220 1180L1260 1165M1235 1245L1225 1310M1510 1115L1515 1190M1500 1200L1515 1320M895 1350L970 1340L1195 1310L1320 1300M830 1340L905 1360L1100 1330M980 1340L1060 1350H1095M970 1360L1060 1360L1080 1370M980 1355V1370H1050M1095 1280L1115 1400M1120 1320L1130 1395M1145 1310L1155 1350M1160 1280L1165 1340M1290 1290L1300 1340L1320 1330M1325 1290H1355V1330H1325ZM1250 1300L1280 1340M1235 1400L1265 1460L1300 1568M1220 1375L1235 1420L1120 1430M1255 1380H1300V1425M1120 1400L1130 1440M1150 1420L1170 1480L1200 1485M1160 1450H1210M1195 1430L1230 1500L1220 1568M1190 1500H1265V1520H1225V1495M1140 1440L1110 1500L1150 1560M1190 1510L1195 1560M865 1460L885 1500L1010 1480L1080 1470L1120 1430M930 1520L1005 1560M960 1500L980 1550M1060 1410V1450M720 1490L740 1520L700 1568M600 1470L620 1460L730 1470L725 1500M645 1395L745 1390L830 1345M540 1460L580 1510M550 1455L580 1540V1500M20 1160L60 1120M20 1230L85 1150M30 1250L110 1190M20 1290L120 1200M100 1140L160 1160L180 1200L150 1200M190 1120L215 1140L200 1160L175 1150ZM225 1125L260 1140L245 1165L220 1160ZM165 1165L190 1170L185 1190L160 1180ZM20 1180L60 1230M45 1170L75 1220M20 1270L80 1320M60 1320L190 1450M70 1340L100 1320M85 1330L150 1380L155 1360L290 1290L355 1240L420 1290L480 1310M95 1360L120 1345M105 1370L130 1355M290 1290L350 1380M340 1260L440 1310M355 1240L400 1270M210 1350L130 1430L100 1490L180 1460M190 1480L350 1390L470 1310M240 1440L320 1520M270 1420L360 1500M300 1400L400 1480M330 1395L440 1470M230 1500L370 1400M250 1530L400 1420M280 1568L440 1440M310 1568L460 1460M280 1440L420 1568M210 1480L290 1568M350 1440L470 1530M370 1420L490 1510M120 1500L180 1568M20 1490L80 1500M20 1380L100 1540M30 1410L150 1568"/>
  </g>

  <!-- north-eastern districts -->
  <g transform="translate(5000 250) scale(1.0638 .7653)">
    <path class="block" d="M215 1380H255V1432L215 1448ZM50 565H95V585H60Z"/>
    <path class="trunk" d="M700 1568L950 1490L1150 1415L1568 1270M720 1568L960 1480L1150 1420L1568 1280"/>
    <path class="major" d="M98 565V880L65 1020L70 1100L100 1170L130 1190L100 1260M104 565V880M0 1185L60 1150L85 1100L150 1030L245 1020L410 925L500 875L690 790L910 735L1055 693L1310 632L1568 695M245 1028L440 915L660 808L940 730L1310 638L1568 702M1480 565L1465 650L1430 850L1420 960L1385 995L1330 1015L1265 1055L1235 1095L1223 1140V1255M1472 565L1458 660L1425 850L1415 960M95 1260L90 1340L110 1390L132 1500L0 1565M222 1235L300 1300L370 1335H445L690 1285L695 1265L875 1262M735 790L760 890L800 960L835 1040M935 745L943 780L940 880L925 970L910 1020L912 1180L935 1360L960 1500L975 1568M1050 1568L1180 1530L1385 1475L1430 1455L1568 1465M895 1365L1030 1352L1150 1370L1170 1265L1225 1270L1290 1230L1568 1230M760 1568L1100 1440"/>
    <path class="minor" d="M110 580H150M110 640H140M222 565L218 605L230 640V765L205 780L215 830L255 835V880L195 892L155 850L163 780V765L183 705L195 625L215 600M105 715L175 708M0 788L20 780L50 740H98M210 790L230 785L235 815L215 820ZM350 685L410 925M357 715L422 705M420 673L500 667L517 765L390 835M420 673L430 810L440 890M458 672L475 785M455 803L472 875M430 810L420 925V995M507 885L505 995M430 955H462M284 890V1000M228 928L285 922M167 905V950L130 952L120 1005L85 1020L78 1000M137 960V1010M195 960L200 1010M163 1035V1140L222 1145M207 1030L200 1190H222M240 1035L225 1235L205 1252H105M238 1050L270 1055M235 1080L265 1085M232 1105L265 1105M230 1140L290 1150L285 1235M228 1160L250 1165M255 1145L250 1180H285M225 1195H280M225 1215L280 1220M100 1060L160 1058V1180L130 1180M0 1200L28 1200L60 1155M28 1215L45 1285L100 1260M0 1375L90 1340M165 1510L170 1370H215V1330M215 1330V1370L207 1525M255 1300V1568M265 1280L255 1300M350 1330L400 1360L393 1395L375 1390V1568M258 1388H335V1410M258 1412L335 1410L370 1405M310 1388V1410M348 1365V1405M378 1388H430M258 1430H295V1510M258 1458H295M258 1482H370M295 1448H420M330 1448V1480M258 1510H295V1535M258 1535L370 1540M132 1510L250 1530M335 1235L385 1245L370 1330M385 1227L432 1235L425 1330M472 1245L468 1330M520 565L530 590L550 585L548 610H592M535 565L545 585M565 590L640 572L660 630L690 700V790M595 590V810M595 738L640 742V797L615 808M640 740L700 710M650 565L685 695M620 680L680 672M640 655L675 650M645 630L665 628M650 600L632 620M700 600L720 605L780 670L800 740M710 650H740L760 590L735 565M720 620L755 600M735 565L780 640L805 750M700 660L690 755L800 735M715 655V690M735 660L750 690M755 640L780 690M720 690L770 675M700 740L790 710M725 720L735 700M800 565L820 590V655L805 690M830 565L822 600M862 565L865 730M840 620L860 630M825 670L860 650M820 690L860 690M815 710L865 722M825 680L850 700M900 565L893 640L900 725M968 565V640L965 720M910 638L1105 642M1055 565V640M1088 600V640M1118 600H1090V565M1118 600L1108 675M1370 640L1480 595L1530 575L1568 590M1330 630L1370 645L1350 750M1055 700V820L1033 810L945 805M1055 820V1030H1040M1055 955H1107V832M1055 966H1107M1050 700V715L965 720M810 748V950M828 750L835 985M850 750L853 910M885 745L880 805M810 808H940M908 810V875M810 878H920M675 922L750 910L935 908M755 928L800 915M760 890L755 910M795 955L920 950M830 985L915 982M675 828L735 812L740 905M680 850H735M685 870L730 865M660 815L675 860L680 1065L790 1050M695 825L710 918M715 820L725 915M745 848H805V755M765 775L770 845M785 765L790 875M835 1040L870 1040L910 1020M790 1050H840M933 1015L935 1075M850 1045L870 1200L880 1310L900 1370L910 1480M855 1078H980V1175L992 1250L965 1258M930 1078V1140H980M912 1180H985M760 1065L755 1190M780 1080V1190M700 1195H838L910 1180M700 1195L690 1265M805 1195L803 1260M830 1110L850 1120L830 1150L838 1190M775 1313L875 1303M920 1190L970 1360L975 1440M960 1190L970 1360M900 1370L910 1485L940 1475M920 1375L940 1450M1125 1340V1365M1135 1340V1368M1145 1345V1368M1290 700L1360 715M1290 700L1280 795L1258 825L1248 970L1338 980M1370 720L1365 790L1430 800M1348 750L1340 980L1330 1015M1258 825L1430 850M1255 877L1415 895M1295 930L1405 940M1450 735L1500 745V1000M1500 775H1540M1430 825H1540V1200M1480 795H1500M1435 850H1460V825M1475 850L1500 845M1435 895L1495 903M1500 893H1535M1425 945H1462V1000M1425 990H1568M1548 965H1568M1548 965V1080M1350 1110L1370 1115V1240M1370 1140H1490L1520 1168L1480 1180H1568M1410 1100V1270L1440 1275M1383 1040L1448 1100M1440 1105V1140M1480 1060V1130M1495 1065V1140M1480 1085H1535M1495 1100L1560 1090M1460 1180L1470 1300M1460 1200L1485 1215M1370 1175H1385M1370 1190H1385M1410 1230H1430M1490 1230L1495 1285L1568 1270M1330 1030L1345 1060M1480 1365L1568 1340M1480 1360V1460M1385 1475V1568M1410 1480V1525M1400 1435V1460M1418 1435V1460M1455 1460L1460 1535H1485V1460M1500 1350L1545 1460M1520 1345L1530 1440M1500 1440H1568M1510 1500L1568 1490M1258 1520V1568M1520 1480V1530M1515 1330H1550M1170 1225H1200M1170 1225L1168 1265"/>
    <path class="stream" d="M515 1303L545 1307L610 1290L655 1260L668 1180"/>
  </g>

  <!-- city centre -->
  <g transform="translate(1900 680) scale(2.0408 .5102)">
    <path class="block" d="M1165 0H1200V180L1165 200ZM190 150H210L200 240ZM310 270L325 260L335 390H325ZM690 310L720 340V390H705ZM1295 240L1340 150V280L1315 370H1295ZM1130 740L1140 730V800ZM0 920L40 930V1000L10 1000Z"/>
    <path class="river" d="M1445 0L1440 60L1430 130L1418 160L1395 140V270L1390 400L1400 560L1390 850L1385 1050L1400 1180L1425 1330L1440 1460L1450 1568"/>
    <path class="trunk" d="M250 0L410 390M335 0L340 390M870 200L900 70L940 10L970 20L1010 90L1070 230L1150 390M990 390L1010 310L1040 280L1110 300M880 850L940 684M920 684L900 850M480 684L500 720L560 760L600 850M1370 1000L1440 950L1520 935L1568 880"/>
    <path class="major" d="M240 0L340 250L400 390M0 130L100 390M340 390L400 200L470 320L660 250L740 390M1000 60V180L980 390M470 310L660 245M1330 0L1240 390M1320 0L1230 390M0 180L80 390M760 390L860 30M960 10L880 180L830 390M1020 130L990 390M1200 684L1230 850M360 684L420 850M275 684L215 850M140 684L170 850M1568 560L1480 620L1445 630L1430 850V1100L1440 1400M1420 900V1100L1430 1400M1568 260H1540L1530 330L1490 350L1470 500L1440 900M1475 0V350L1430 850M1568 930H1520L1370 970M580 684L600 850"/>
    <path class="minor" d="M0 70L60 150L130 390M20 0L90 180L150 390M0 300L100 100L150 0M0 390L190 0M50 390L240 0M100 390L280 40M140 390L260 110M180 390L300 150M210 390L330 200M60 0L200 390M90 0L240 390M120 0L270 390M150 0L300 390M190 0L330 350M220 0L240 50M0 120L60 90M20 180L85 155M40 0L30 220M80 0L70 280M0 240L40 390M280 0L290 80L340 60M300 0L340 130M350 0L450 130L480 40M360 60L470 320M380 0L390 110L460 90M400 0L390 80L350 220M340 110L390 170M420 0L440 110M350 150L440 120M480 0L465 320M500 0L510 230M530 0L540 390M550 20L600 310M560 0L600 110L560 130M590 0L640 120M620 0L590 240M650 0L600 320M600 50L650 70M500 100L560 70M500 120L530 110M490 160L550 130M600 150L650 110M480 230L510 240M600 210L660 180M590 250L640 230M480 330L480 390M490 320L500 390M540 320L545 390M560 310V390M590 300L600 390M450 350L470 340M450 350L440 390M470 370L650 280M620 270L640 390M650 260L680 390M570 340L640 370M670 0L650 70L700 240M700 0L720 60L690 270M720 60L780 150L830 40L870 0M720 60L760 0M740 20L820 150L900 240M820 0L770 120L700 280M850 0L740 300M880 0L780 270M800 60L840 90M760 110L830 150L800 390M780 150L750 390M840 130L870 180M830 150L860 250M700 270L720 390M730 300L790 270L820 350M680 130L740 90M700 200L750 160M900 80L950 60L960 130L900 150M910 70L920 240L1000 60M940 60L1000 110M890 160L960 210L1000 230M920 200L880 390M960 180L910 390M1000 180L930 390M950 230L900 330M880 250L960 280M870 300L960 340M1020 120L1060 180L1050 280M1010 0L1090 100L1140 0M1040 0L1060 70L1130 40M1020 20L1140 180M1060 200L1140 50M1080 0L1160 150M1090 250L1180 20M1100 290L1200 70M1120 0L1130 80L1060 240M1080 230L1200 130M1120 160L1165 140M1120 190L1200 160M1150 0V60M1180 180L1200 280L1290 240M1200 0L1210 130L1250 0M1220 0L1260 140L1230 200L1190 150M1240 60L1290 150M1210 90L1290 130M1200 130L1260 390M1150 390L1250 200M1190 390L1260 140L1310 0M1130 300L1200 340M1110 260L1180 320L1200 390M1140 240L1220 280M1220 230L1280 280L1300 390M1170 330L1150 390M1000 380L1090 360M1010 350L1090 340M1020 330L1080 320L1110 390M1280 0L1250 80L1310 120M1340 20L1300 170M1360 0L1340 90L1380 60M1280 230L1340 170M1240 390H1300M0 470L40 540M0 440L40 480M50 684L90 720L130 720M70 684L120 850M100 684L150 850M130 684L90 850M180 684L120 850M170 684L230 850M200 684L250 850M230 684L290 850M240 684L180 850M270 684L240 850M300 684L250 850M310 684L350 850M340 684L280 850M350 684V850M380 684L320 850M400 684L440 850M420 684L370 850M450 684L400 850M440 684L480 850M470 684L430 850M500 684L460 850M520 684L560 740M580 700L640 820H700M600 720L720 830M590 684L680 790M620 684L600 760M650 684L690 760L640 820M680 684L700 780L760 684M720 684L750 800L790 684M740 720L820 850M770 684L800 850M800 684L790 850M830 684L860 800M850 684L820 850M870 684L890 850M960 684L1000 850M980 684L1100 780M1010 684L950 850M1040 684L1120 850M1070 684L1000 850M1100 684L1060 850M970 740L1070 830M1090 740L1160 700M1140 684L1100 850M1160 684L1150 850L1290 760M1180 684L1170 850M1210 740L1280 710M1250 684L1180 850M1280 684L1250 850M1300 684L1310 850M1220 780L1300 850M1260 815V850H1300M0 960L40 990M0 1010L30 1130M10 1030L40 1180M0 1100L40 1200M0 1060L20 1160M0 1490L30 1480L50 1530L20 1568M1370 665H1420L1425 635L1465 640L1470 880L1430 900M1440 740H1470V700M1370 1000L1430 950L1500 960L1530 900M1370 1040L1415 1020M1380 1115L1420 1110M1500 960L1510 1180L1540 1190M1500 960L1530 1000L1568 1100M1510 1200L1440 1330L1370 1430M1400 1380L1370 1340M1405 1250L1400 1380M1430 1400L1568 1170M1470 1568L1568 1450M1520 0L1510 200M1470 1568L1430 1500M1455 430L1430 700"/>
  </g>
  <g transform="translate(1940 850) scale(1.7857 .4464)">
    <path class="block" d="M100 1530L130 1450V1690H95ZM55 1430L70 1400L90 1500L70 1510ZM770 1367H805V1430L790 1450ZM1285 1380H1345V1500H1285ZM1265 1520H1380V1690H1265Z"/>
    <path class="major" d="M155 1367L60 1690M165 1367L240 1690M330 1367L370 1500L350 1690M540 1367L480 1450L460 1690M650 1367L560 1690M900 1367L1010 1690M920 1367L1030 1690M1110 1367L1090 1500L1200 1690M1235 1367V1690M1440 1367L1435 1690M1265 1512H1380M480 1385L550 1395L640 1480L740 1690M0 1620L60 1568L110 1450"/>
    <path class="minor" d="M30 1367L100 1690M60 1367L20 1690M80 1367L160 1690M110 1367L40 1690M130 1440L90 1690M140 1367L220 1690M190 1367L110 1690M200 1367L280 1690M220 1367L150 1690M240 1367L320 1690M260 1367L190 1690M290 1367L350 1600M310 1367L230 1690M350 1400L270 1690M370 1480L410 1450V1367M370 1500H410M370 1560L430 1540M400 1367L390 1690M430 1367L520 1560L600 1690M460 1367L400 1600M450 1440L550 1568L620 1690M520 1367L430 1690M560 1400L500 1690M580 1367L690 1690M600 1480L680 1430L760 1500M600 1367L530 1690M630 1367L720 1568L780 1690M680 1367L620 1690M700 1367L840 1690M720 1460L860 1500L900 1568M740 1367L660 1690M770 1430L900 1480M790 1367L710 1690M800 1367L880 1600M830 1367L760 1690M850 1367L980 1690M870 1367L800 1690M900 1400L840 1690M930 1380L880 1690M960 1367L1080 1690M980 1367L900 1690M1000 1367L1120 1690M1020 1367L950 1690M1050 1367L1160 1690M1060 1367L990 1690M1090 1380L1030 1690M1110 1367L1200 1568M1130 1400L1070 1690M1150 1414H1235M1150 1367V1414L1110 1568M1160 1440L1235 1445M1170 1367V1414M1205 1460H1235V1520H1205ZM1200 1367V1414M1180 1480L1130 1690M1280 1367V1510M1320 1367V1510M1345 1400L1380 1380V1510M1320 1520V1690M1395 1367V1500M1395 1420L1440 1410M1410 1367V1690M1470 1367L1480 1568L1520 1690M1480 1520L1540 1440M1500 1400L1568 1600M1500 1367L1530 1440L1568 1420M1440 1560L1500 1540"/>
  </g>
  <g transform="translate(1940 1740) scale(1.7857 .574)">
    <path class="block" d="M80 1040L100 1030L105 1110L90 1130ZM145 1010L175 980L180 1030L150 1060ZM540 1440L570 1420V1530H540Z"/>
    <path class="trunk" d="M600 1090L660 1080L770 1135L930 1140M1420 170L1440 90L1530 20M1390 1420L1390 1568M770 1568L960 1545L1100 1490L1300 1470L1380 1540M1410 920V1155M40 1568L280 1420M520 22L575 140"/>
    <path class="major" d="M1380 1420V1568M500 22L560 100M510 22L440 168M260 920L120 1130L115 1155M250 920L110 1120L60 1010M700 1568L750 1490L1050 1440L1080 1510M500 970L490 1155M1200 22L1250 140H1360L1430 70M1360 168L1440 60M925 1140L1000 920M1000 22V168M1150 22V168M1420 920V1155M0 180L26 190M320 1420L410 1568"/>
    <path class="minor" d="M40 168L130 22M80 168L160 22M120 22L180 168M160 22L240 168M110 168L200 22M160 168L260 22M200 22L280 168M220 168L310 22M240 22L320 168M270 168L350 22M290 22L345 140L420 165M330 120L380 168M330 140L400 22M400 168L450 22M420 168L480 22M450 22L510 168M470 168L520 60M500 168L560 60M550 22L620 168M580 168L640 22M600 22L660 168M620 168L680 22M660 168L710 120L770 90L800 22M700 22L730 130L700 168M720 22L770 120M760 168L810 22M780 22L830 168M820 22L880 168M850 168L900 22M880 22L960 80L990 160M900 168L960 60M930 22L940 168M1010 95L1210 90M1000 155L1060 160L1225 155M1030 22V168M1060 22V150M1090 22V160M1120 22V168M1170 22V160M1200 90L1225 160L1260 110M1240 22V120M1270 22V160M1290 22V168M1320 22L1300 140M1340 22V145M1380 22L1360 140M1400 22L1380 100M1230 60H1300M1270 70L1370 60M60 1010L90 1155M50 920L40 1100M40 1110L260 920M100 920L40 1000M150 930L60 1050M130 1130L200 1155M140 950L250 920M180 920L200 1120M220 1060L290 920M250 930L300 1155M270 1155L400 920M300 920L200 1155M330 920L350 1155M310 1155L440 920M360 930L390 1155M350 1155L470 960M400 920L430 1100L470 1000M380 1155L500 1000M440 920L460 1120M430 1000L500 920M500 1060L600 1100M510 1060L560 1155M555 920L640 1000M560 950L600 920L640 1030M620 920L640 960M690 920L695 1040L780 1070L850 1080M690 1040L660 1090V1155M740 920L735 1010L760 1020M695 940L760 980L830 1010L850 980M760 980L790 920M720 1050L700 1110M750 1060L745 1120M780 1070L770 1135M820 1080L810 1140M850 920L860 1080L850 1150M860 920L960 1100L1040 1155M880 980L980 920M900 1020L1050 920M920 1060L1100 940M940 920L1080 1155M980 920L1120 1155M1020 930L1150 1155M1060 920L1190 1110M1000 1155L1120 1000M1040 1155L1180 1000M1080 1155L1200 1040M1100 920L1180 1040M1180 1035H1310M1180 1110L1205 1100M1205 920V1110M1235 920V1155M1240 975H1280M1240 1075L1310 1080V1155M1200 990H1235M1310 930V1080M1430 1060L1490 1065M1480 1000L1540 960M1480 1100L1530 1060M1520 920L1500 1000M1540 1000L1500 1080L1540 1155M0 240L26 245M0 330L26 340M0 540L26 520M0 700L26 660M0 930L26 1000M0 1100L40 1300M0 1160L26 1140M0 1250L26 1190M0 1568L60 1480M30 1420L60 1500L40 1568M290 1420L200 1568M340 1420L250 1568M400 1420L470 1530M440 1420L480 1520L520 1500M510 1420V1568M540 1420V1535H590M430 1540L480 1568M610 1420L600 1568M640 1420L660 1568M700 1420L740 1500M720 1420L750 1480M770 1420L790 1490M850 1420L870 1480M890 1470V1568M930 1420L960 1450M970 1420V1450M1040 1420L1100 1500L1150 1420M1120 1420L1100 1480M1230 1420L1210 1470M1290 1420L1330 1500M1480 1420V1568M1480 1520L1568 1510M1500 1430L1568 1420M900 1568L1000 1450M1000 1540L1050 1450M1540 540H1568M1540 1325H1568"/>
    <path class="river" d="M635 1100L600 1120L565 1155M600 1420L590 1568M280 1420L140 1568"/>
  </g>
  <g transform="translate(1940 3000) scale(1.7857 .3406)">
    <path class="block" d="M635 465H677V648H635ZM1120 202H1170L1150 280ZM510 202H540L530 240Z"/>
    <path class="stream" d="M26 250L100 350L230 540L300 648"/>
    <path class="river" d="M545 202L520 480L510 648M475 1088L460 1340"/>
    <path class="major" d="M460 202L420 420L350 648M670 202L610 470L600 648M1440 202L1470 648M1455 202L1480 648M1420 202L1440 300L1500 400L1530 560M350 1088L340 1340M330 1088L325 1340M600 1088L595 1340M880 1088L930 1340M1510 1088L1568 1340M1520 1088L1568 1300M820 202L860 648"/>
    <path class="minor" d="M30 200L80 648M100 648L135 530L170 648M205 202L190 300L235 500L180 648M190 300L160 400M235 220L260 240L270 300L235 480M290 202L270 300M280 260L310 320L370 430M230 540L245 640L295 505H335L370 648M380 202L370 400L390 202M430 202L420 360L350 600M450 202L420 400L390 648M440 202L495 350L530 470M460 440L490 510L530 450M455 320L460 560L490 648M610 202L605 400M570 285L630 295M600 395L620 400M540 455L675 462M545 460V648M575 465V648M590 465V648M605 470V648M545 630H565M615 640H675M690 480L725 478V202M700 380L690 300L720 200M690 480L680 648M765 390L800 240L790 202M855 202V300M860 460L900 350L935 290L930 202M935 202L945 648M865 410L890 340V300M895 480H920M895 370V480M945 520L990 460L1000 648M960 202L1020 560M980 202L990 300L960 430M865 550L885 550M920 420V590L895 640M1010 202L1050 350L1100 520L1135 550V620M1210 202L1230 648M1215 202L1270 400L1290 648M1235 202L1290 480M1270 500L1215 648M1300 340L1290 450L1270 500M1490 230L1530 400L1568 300M1500 202L1568 400M1530 202L1568 300M1530 540L1568 530M1530 580L1568 620M60 1088L80 1340M185 1088L220 1280L215 1340M55 1340L70 1290L95 1270M270 1088L240 1200M320 1088L345 1150L375 1220V1340M360 1088L380 1200M500 1088L510 1340M550 1088L545 1340M545 1175H605M560 1180L550 1260M580 1180L590 1240M570 1088V1175M740 1140L760 1340M890 1088L905 1220L925 1110M930 1120L960 1200M920 1190L960 1230M960 1200L940 1310L915 1280L960 1210M965 1088L970 1340M1140 1088L1175 1340M1370 1088L1420 1340M1500 1200L1530 1340M0 0L26 200M1545 648L1568 800M1560 660L1545 900M1545 960L1560 1080M1540 0L1568 100"/>
  </g>
</svg>

<div class="page">
  <header class="site-header">
    <p class="credits">
      <span class="fit" data-width="202">COL CONTRIBUTO DI:</span>
      <span class="fit" data-width="53">ANED</span>
      <span class="fit" data-width="327">LATO B - L’ALTRO LATO DI MILANO</span>
      <span class="fit" data-width="336">RETE DELLA CONOSCENZA MILANO</span>
      <span class="fit" data-width="129">ARCI MILANO</span>
    </p>
    <div class="brand-column">
      <h1 class="logo"><span class="fit" data-width="610">O<span class="logo-small">RIENTA</span>MI</span></h1>
      <nav class="main-nav">
        <a class="nav-link"><span class="fit" data-width="112">HOME</span></a>
        <a class="nav-link"><span class="fit" data-width="193">LE MAPPE</span></a>
        <a class="nav-link active"><span class="fit" data-width="516">COME FUNZIONA IL SITO</span></a>
        <a class="nav-link"><span class="fit" data-width="407">SCOPRI IL PROGETTO</span></a>
        <a class="nav-link"><span class="fit" data-width="205">CHI SIAMO</span></a>
        <a class="nav-link"><span class="fit" data-width="184">CONTATTI</span></a>
      </nav>
    </div>
    <div class="side-links">
      <a class="nav-link"><span class="fit" data-width="567">CONTROBUISCI AL PROGETTO</span></a>
      <a class="nav-link"><span class="fit" data-width="623">SEI UNO STUDENTE FUORISEDE?</span></a>
    </div>
  </header>

  <main class="content">
    <section class="topic">
      <h2 class="topic-title"><span class="fit" data-width="405">TIPOLOGIA DI MAPPA</span></h2>
      <p class="topic-text">
        <span class="fit" data-width="1535">All’interno di questo portare potrai trovare quattro mappe generali, ognuna suddivisa in diversi livelli, denominate: Servizi,</span>
        <span class="fit" data-width="1554">Socialità e attivismo, Cultura e Memoria antifascista. I luoghi sono stati così raggruppati per agevolarne la consultazione nei</span>
        <span class="fit" data-width="969">diversi campi di interesse. bla blablablabablablababalbalbalbalbalbalbalabla</span>
      </p>
    </section>
    <section class="topic homepage">
      <h2 class="topic-title"><span class="fit" data-width="216">HOMEPAGE</span></h2>
      <p class="topic-text">
        <span class="fit" data-width="1586">Nella homepage sono raccolte tutte le categorie degli spazi censiti di milano divisi per icone. Cluccando sull’icona verrai riman-</span>
        <span class="fit" data-width="1480">dato alla pagina che contiene la singola mappa che riunisce i luoghi di quella categoria. Qui, inoltre, troverai una breve</span>
        <span class="fit" data-width="1545">descrizione sulle motivazioni che ci hanno spinto a scegliere quella categoria in particolare, quindi i luoghi inseriti. una volta</span>
        <span class="fit" data-width="1482">aperta la pagina delle singola categoria, non si può risalire alla mappa generale o alla sovrapposizione di più categorie.</span>
      </p>
    </section>
    <section class="topic levels">
      <h2 class="topic-title"><span class="fit" data-width="143">LIVELLI</span></h2>
      <p class="topic-text">
        <span class="fit" data-width="1586">Nella homepage sono raccolte tutte le categorie degli spazi censiti di milano divisi per icone. Cluccando sull’icona verrai riman-</span>
        <span class="fit" data-width="1480">dato alla pagina che contiene la singola mappa che riunisce i luoghi di quella categoria. Qui, inoltre, troverai una breve</span>
        <span class="fit" data-width="1545">descrizione sulle motivazioni che ci hanno spinto a scegliere quella categoria in particolare, quindi i luoghi inseriti. una volta</span>
        <span class="fit" data-width="1482">aperta la pagina delle singola categoria, non si può risalire alla mappa generale o alla sovrapposizione di più categorie.</span>
      </p>
    </section>
    <section class="topic directions">
      <h2 class="topic-title"><span class="fit" data-width="441">INDICAZIONI STRADALI</span></h2>
      <p class="topic-text">
        <span class="fit" data-width="1535">All’interno di questo portare potrai trovare quattro mappe generali, ognuna suddivisa in diversi livelli, denominate: Servizi,</span>
      </p>
    </section>
  </main>
</div>
<script src="fit.js"></script>
</body>
</html>
```
FILE: styles.css
```css
* { box-sizing: border-box; }

html, body {
  margin: 0;
  overflow: hidden;
}

body {
  width: 4096px;
  height: 2171px;
  background: #fefefe;
  color: #1a1a1a;
  font-family: Roboto, "Liberation Sans", sans-serif;
  font-weight: 400;
}

h1, h2, p { margin: 0; }

/* ---------- map backdrop ---------- */
.map {
  position: absolute;
  inset: 0;
  width: 4096px;
  height: 2171px;
}
.map path { stroke-linecap: butt; stroke-linejoin: round; }
.map .dot-s { stroke: #c4c6c5; stroke-width: 29; stroke-linecap: round; }
.map .dot-l { stroke: #c4c6c5; stroke-width: 55; stroke-linecap: round; }
.map .ripple { stroke: #b3c5cd; stroke-width: 13; stroke-linecap: round; }
.land { fill: #fefefe; }
.built { fill: #fefefe; }
.field { fill: #fbfbfb; }
.park { fill: #f8f8f6; }
.block { fill: #efefef; }
.water { fill: #cbdce5; }
.minor, .major, .trunk, .runway, .stream, .river, .canal {
  fill: none;
  vector-effect: non-scaling-stroke;
}
.minor { stroke: #cecece; stroke-width: 2.4px; }
.major { stroke: #cccccc; stroke-width: 4px; }
.trunk { stroke: #cccccc; stroke-width: 7px; }
.runway { stroke: #eeeeee; stroke-width: 5px; }
.stream { stroke: #d9dfe1; stroke-width: 2.4px; }
.river { stroke: #cbdde6; stroke-width: 5px; }
.canal { stroke: #cbdde6; stroke-width: 6px; }

/* ---------- page ---------- */
.page { position: relative; }

.fit {
  display: block;
  white-space: nowrap;
}
.fit-inner {
  display: inline-block;
  transform-origin: 0 50%;
}

.site-header {
  display: grid;
  grid-template-columns: 1043px 2407px 1fr;
  height: 419px;
  background: #fefefe;
  border: solid #e2e2e2;
  border-width: 0 1px;
  box-shadow: 7px 11px 22px rgba(0, 0, 0, .42);
}

.credits {
  padding: 31px 0 0 41px;
  font-size: 31px;
  line-height: 32.9px;
  font-weight: 500;
}

.brand-column { display: flex; flex-direction: column; }

.logo {
  height: 300px;
  padding: 45px 0 0 716px;
  font-size: 178px;
  line-height: 178px;
  font-weight: 900;
  -webkit-text-stroke: 4px #1a1a1a;
}
.logo-small { font-size: .8em; }

.main-nav {
  display: flex;
  gap: 89px;
  padding-left: 1px;
}

.nav-link {
  position: relative;
  font-size: 62px;
  line-height: 62px;
  -webkit-text-stroke: .6px #1a1a1a;
}
.active {
  margin: 0 -27px;
  font-weight: 900;
  -webkit-text-stroke: 1.2px #1a1a1a;
}
.active::after {
  content: "";
  position: absolute;
  left: -18px;
  top: 65px;
  width: 563px;
  height: 4px;
  background: #000;
}

.side-links {
  display: flex;
  flex-direction: column;
  gap: 43px;
  padding-top: 195px;
}

.content {
  width: 1659px;
  margin: 121px 0 0 1220px;
}

.topic-title {
  display: flex;
  justify-content: center;
  height: 92px;
  margin-bottom: 52px;
  padding-top: 2px;
  background: #1a1a1a;
  color: #fefefe;
  font-size: 62px;
  line-height: 92px;
  font-weight: 400;
  box-shadow: 7px 10px 20px rgba(0, 0, 0, .42);
}

.topic-text {
  min-height: 213px;
  padding: 21px 0 0 36px;
  background: #fefefe;
  font-size: 46px;
  line-height: 55.5px;
  font-variant: small-caps;
  word-spacing: .05em;
  -webkit-text-stroke: .5px #1a1a1a;
  box-shadow: 7px 10px 20px rgba(0, 0, 0, .42);
}

.homepage { margin-top: 87px; }
.levels { margin-top: 84px; }
.directions { margin-top: 93px; }
.homepage .topic-text, .levels .topic-text { height: 264.5px; }
```
FILE: fit.js
```js
// Condenses each label horizontally to the width given in data-width.
document.querySelectorAll('.fit').forEach(function (el) {
  var target = parseFloat(el.dataset.width);
  var inner = document.createElement('span');
  inner.className = 'fit-inner';
  while (el.firstChild) inner.appendChild(el.firstChild);
  el.appendChild(inner);
  var natural = inner.getBoundingClientRect().width;
  el.style.width = target + 'px';
  inner.style.transform = 'scaleX(' + target / natural + ')';
});
```
